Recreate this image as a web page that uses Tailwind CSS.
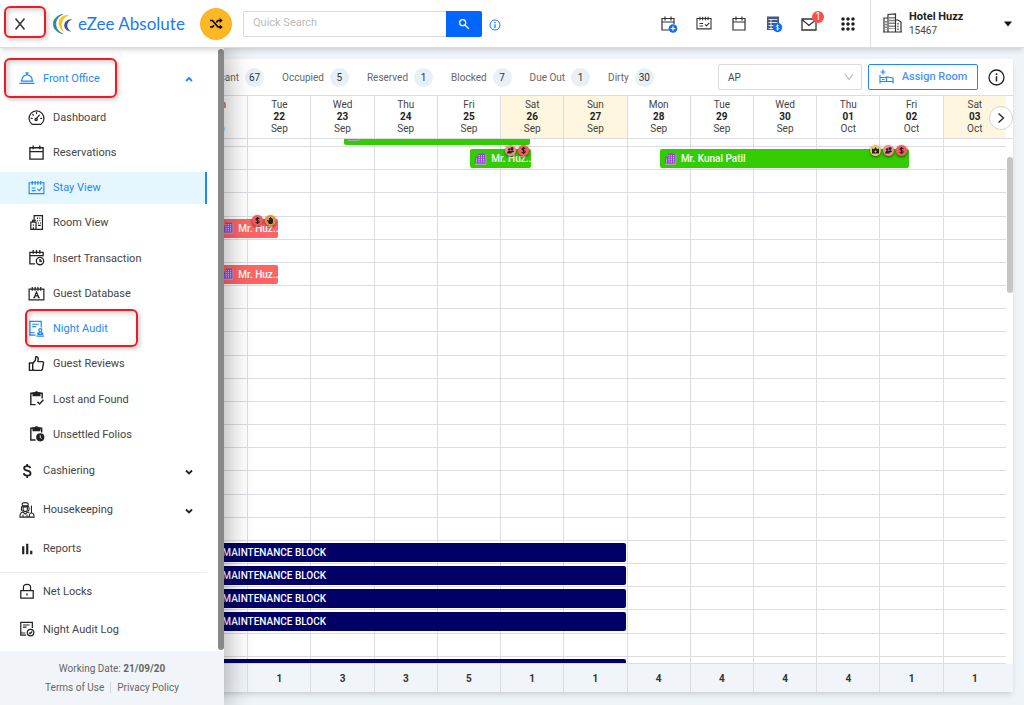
<!DOCTYPE html>
<html lang="en">
<head>
  <meta charset="UTF-8">
  <meta name="viewport" content="width=device-width, initial-scale=1.0">
  <title>eZee Absolute - Stay View</title>
  <script src="https://cdn.jsdelivr.net/npm/@tailwindcss/browser@4"></script>
</head>
<body class="flex h-screen flex-col overflow-hidden bg-[#eff4f8] font-[Roboto,sans-serif] text-[11px] text-[#444]">

  <!-- Icon set -->
  <svg class="hidden">
    <symbol id="i-bell" viewBox="0 0 18 14" fill="none" stroke="currentColor" stroke-width="1.5" stroke-linecap="round">
      <path d="M1 13h16M2.500 10.500h13M3 10a6 6.500 0 0 1 12 0M9 3.500V1.300M7.800 1.300h2.400"/>
    </symbol>
    <symbol id="i-gauge" viewBox="0 0 18 18" fill="none" stroke="currentColor" stroke-width="1.300" stroke-linecap="round">
      <path d="M4.300 16.200a7.900 7.900 0 1 1 9.400 0zM8.300 11l3.700-4.500M3.500 10h1M13.500 10h1M9 3.700v1M5 5.800l.7.700"/>
      <circle cx="8.600" cy="11" r="1.200"/>
    </symbol>
    <symbol id="i-cal" viewBox="0 0 18 18" fill="none" stroke="currentColor" stroke-width="1.400">
      <path d="M2 4h14v12H2zM2 8h14M5.500 1.500v4M12.500 1.500v4"/>
    </symbol>
    <symbol id="i-stay" viewBox="0 0 18 18" fill="none" stroke="currentColor" stroke-width="1.200">
      <path d="M1.200 4h15.600v11.500H1.200zM4.500 2v4M7.500 2v4M10.500 2v4M13.500 2v4M4 9.500h4M4 12.300h4M10 10.500l1.800 1.800 3-3.500"/>
    </symbol>
    <symbol id="i-room" viewBox="0 0 18 18" fill="none" stroke="currentColor" stroke-width="1.300">
      <path d="M6.500 8V1.700h8.800v14.600H3V8.500h5.500v7.800M4.800 8.500V6.800h3.500M5.700 11v1.500M5.700 14v2"/>
      <path d="M9.500 4.500h1M12 4.500h1M9.500 7h1M12 7h1M10.500 9.500h1M12.800 9.500h.8M10.500 12h3" stroke-width="1.400"/>
    </symbol>
    <symbol id="i-calclock" viewBox="0 0 18 18" fill="none" stroke="currentColor" stroke-width="1.400">
      <path d="M7.500 15.800H2V3.500h14V8M2 7h14M5.500 1v4M9 1v4M12.500 1v4"/>
      <circle cx="12.700" cy="12.800" r="3.900"/><path d="M12.700 10.700v2.300h2"/>
    </symbol>
    <symbol id="i-guest" viewBox="0 0 18 18" fill="none" stroke="currentColor" stroke-width="1.300">
      <path d="M1.200 4.300h15.600v11.500H1.200zM4.500 2v4M7.500 2v4M10.500 2v4M13.500 2v4M6.500 13.500L9 7.500l2.500 6M7.500 11.500h3M5.500 13.500h2M10.500 13.500h2"/>
    </symbol>
    <symbol id="i-audit" viewBox="0 0 18 18" fill="none" stroke="currentColor" stroke-width="1.300">
      <path d="M8 16H2V1.500h12V8M4.500 4.500h7M4.500 7h4M2 13.500h5"/>
      <circle cx="13" cy="10.700" r="1.600"/><path d="M12.300 12.200l-.5 1.700h-1.300v1.300h5v-1.300h-1.300l-.5-1.700M9 17h8"/>
    </symbol>
    <symbol id="i-thumb" viewBox="0 0 18 18" fill="none" stroke="currentColor" stroke-width="1.500" stroke-linejoin="round">
      <path d="M1.500 8.500H5v7.800H1.500zM5 9l2.800-3.500.5-3.700c1.800-.3 2.600.8 2.500 2.200L10.500 7H15c1.200 0 1.600.8 1.400 1.800l-1.100 6c-.2.900-.7 1.500-1.700 1.500H7L5 15.500"/>
    </symbol>
    <symbol id="i-clipcheck" viewBox="0 0 18 18" fill="none" stroke="currentColor" stroke-width="1.500">
      <path d="M8 15.500H3V3.500h12V9M10 12.500l2.300 2.300 4-4.500"/><path d="M5.500 5.800V3h2a1.600 1.600 0 0 1 3 0h2v2.800z" fill="currentColor"/>
    </symbol>
    <symbol id="i-clipclock" viewBox="0 0 18 18" fill="none" stroke="currentColor" stroke-width="1.500">
      <path d="M8 15.800H3V3.500h11.500V8"/><path d="M5.500 5.800V3h2a1.600 1.600 0 0 1 3 0h2v2.800z" fill="currentColor"/>
      <circle cx="13" cy="13" r="3.600" fill="currentColor"/><path d="M13 11v2.200l1.300 1" stroke="#fff" stroke-width="1"/>
    </symbol>
    <symbol id="i-dollar" viewBox="0 0 18 18" fill="none" stroke="currentColor" stroke-width="2">
      <path d="M12.700 5.800C12.400 4.300 11 3.600 9.200 3.600 7.200 3.600 5.700 4.500 5.700 6c0 3.500 7.300 1.900 7.300 5.400 0 1.700-1.600 2.700-3.700 2.700-2.300 0-3.700-1-4-2.800M9.200 1v3M9.200 14v3"/>
    </symbol>
    <symbol id="i-maid" viewBox="0 0 18 18" fill="none" stroke="currentColor" stroke-width="1.200">
      <path d="M3.500 2C4 .3 10 .3 10.500 2l-.4 2.200H3.900zM3.900 4.200C2 6 2.600 9.500 3.800 10.500M10.100 4.200C12 6 11.400 9.500 10.200 10.500M4.600 5.500v2.700c0 3.400 4.800 3.400 4.800 0V5.500zM1 16.800c0-3.500 1-5 3.500-5.500L7 13.500l2.500-2.200c1 .2 1.500.5 2 1M.5 17h17M14 4v8M11.500 16.800c0-3 .8-4.500 2.500-4.500s3 1.500 3 4.500M4.500 14v2.500M9 14v2.500"/>
    </symbol>
    <symbol id="i-bars" viewBox="0 0 18 18" fill="currentColor">
      <path d="M3.500 6H6v9H3.500zM8 3h2.500v12H8zM12.500 11H15v4h-2.500z"/>
    </symbol>
    <symbol id="i-lock" viewBox="0 0 18 18" fill="none" stroke="currentColor" stroke-width="1.400">
      <path d="M2 8.500h14V17H2zM5 8.500V4.800C5 .3 13 .3 13 4.800v3.700M9 11.500V14"/>
    </symbol>
    <symbol id="i-log" viewBox="0 0 18 18" fill="none" stroke="currentColor" stroke-width="1.400">
      <path d="M8 16H2V1.500h13V8M4.500 4.500h7.500M4.500 7h4M2 13.500h5"/>
      <circle cx="13" cy="13" r="3.700"/><path d="M11.300 13l1.200 1.300 2.300-2.500"/>
    </symbol>
    <symbol id="i-folio" viewBox="0 0 16 16">
      <path d="M0 15V5h4V1h11v14z" fill="#8b46c4"/>
      <path d="M2 7v7M5.500 2.500V14M8.500 2.500V14M11.500 2.500V14" stroke="#dcc2f2" stroke-width="1.500" stroke-dasharray="1.800 1"/>
      <path d="M14.500 1v14H0" stroke="#d7b8f2" fill="none"/>
    </symbol>
  </svg>

  <header class="relative z-30 flex h-12 shrink-0 items-center border-b border-[#d9dde2] bg-white shadow-md">
    <button class="ml-3 flex size-4 items-center justify-center" aria-label="Close menu">
      <svg class="size-3 text-[#333]" viewBox="0 0 12 12" fill="none" stroke="currentColor" stroke-width="1.500"><path d="M1.500 .5l9 11M10.500 .5l-9 11"/></svg>
    </button>
    <a href="#" class="ml-[25px] flex w-[147px] items-center gap-1 text-[17px] whitespace-nowrap text-[#1b7af5] font-[Lato,sans-serif]">
      <svg class="h-5 w-[21px] shrink-0" viewBox="0 0 21 20">
        <path d="M10 0C-3 3-3 17 10 20 .500 15.500.500 4.500 10 0z" fill="#2b8a9a" stroke="#2b8a9a" stroke-width=".6"/>
        <path d="M17 .800C4 .500 2.500 12 11 18 6.500 11 9 3.500 17 .800z" fill="#fcc419"/>
        <path d="M19.500 5C9 5 8.500 17 18.500 17.500 12.500 14.500 13 7.500 19.500 5z" fill="#3a529f"/>
      </svg>
      eZee Absolute
    </a>
    <button class="flex size-8 shrink-0 items-center justify-center rounded-full bg-[#feb724]" aria-label="Switch">
      <svg class="size-3.5 text-black" viewBox="0 0 14 14" fill="none" stroke="currentColor" stroke-width="1.700"><path d="M1 3.500h2.500l5.500 6.500h3M1 10h2.500L5 8.300M7.300 5.400L9 3.500h3"/><path d="M10.700 1v5l3-2.500zM10.700 7.500v5l3-2.500z" fill="currentColor" stroke="none"/></svg>
    </button>
    <form class="ml-[11px] flex h-[26px] w-[239px]">
      <input type="text" aria-label="Quick Search" placeholder="Quick Search" class="min-w-0 flex-1 rounded-l-xs border border-r-0 border-[#d9d9d9] px-[9px] outline-none placeholder:text-[#bbb]">
      <button type="button" class="flex w-9 items-center justify-center rounded-r-xs bg-[#0066ff] text-white" aria-label="Search">
        <svg class="size-3" viewBox="0 0 12 12" fill="none" stroke="currentColor" stroke-width="1.300"><circle cx="4.700" cy="4.700" r="3"/><path d="M7 7l4 4"/></svg>
      </button>
    </form>
    <button class="ml-[7px] mt-0.5 text-[#1677ff]" aria-label="Search help">
      <svg class="size-3" viewBox="0 0 12 12" fill="none" stroke="currentColor"><circle cx="6" cy="6" r="5"/><path d="M6 5.200v3.800M6 3v1.200" stroke-width="1.300"/></svg>
    </button>

    <nav class="ml-auto flex items-center gap-[17px] pr-[13px] text-[#333]" aria-label="Shortcuts">
      <button aria-label="New booking">
        <svg class="size-[18px]" viewBox="0 0 18 18" fill="none" stroke="currentColor" stroke-width="1.200"><path d="M9 15H2V3.500h12V9M2 7h12M5 1.500v4M11 1.500v4"/><circle cx="13" cy="13.500" r="4.300" fill="#0a6cff" stroke="none"/><path d="M13 11.200v4.600M10.700 13.500h4.600" stroke="#fff"/></svg>
      </button>
      <button aria-label="Stay view"><svg class="-mt-0.5 size-[18px]" viewBox="0 0 20 18"><use href="#i-stay"/></svg></button>
      <button aria-label="Reservations"><svg class="size-[18px]" viewBox="0 0 18 18" fill="none" stroke="currentColor" stroke-width="1.200"><path d="M3 3.500h12v11.500H3zM3 7h12M6 1.500v4M12 1.500v4"/></svg></button>
      <button aria-label="Rates">
        <svg class="size-[18px]" viewBox="0 0 18 18"><path d="M2 1.500h12V15H2z" fill="#44597a"/><path d="M3.500 4.500h9M3.500 7.500h9M3.500 10.500h9M3.500 13.500h5M6 4v10.500" stroke="#fff" stroke-width=".8"/><circle cx="12.500" cy="12.500" r="4.700" fill="#0a6cff"/><path d="M14 11c-.5-.8-2.800-.8-2.800.3 0 1.300 2.800.9 2.800 2.200 0 1.200-2.500 1.200-3 .2M12.500 9.500v6" fill="none" stroke="#fff" stroke-width=".8"/></svg>
      </button>
      <button class="relative" aria-label="Messages">
        <svg class="size-[18px]" viewBox="0 0 18 18" fill="none" stroke="currentColor" stroke-width="1.300"><path d="M2 4h14v11H2zM2 4.500l7 6 7-6"/></svg>
        <span class="absolute -top-1 left-3 flex size-3 items-center justify-center rounded-full bg-[#ff4d4f] text-[10px] leading-none text-white">1</span>
      </button>
      <button class="ml-1" aria-label="Apps">
        <svg class="size-[18px]" viewBox="0 0 18 18" fill="none" stroke="#222" stroke-width="3.600" stroke-linecap="round"><path d="M4 4h.01M9 4h.01M14 4h.01M4 9h.01M9 9h.01M14 9h.01M4 14h.01M9 14h.01M14 14h.01"/></svg>
      </button>
    </nav>
    <button class="flex h-full w-[154px] items-center border-l border-[#dcdfe4] px-3 text-left">
      <svg class="-mt-0.5 h-5 w-[19px]" viewBox="0 0 19 20" fill="none" stroke="#333" stroke-width="1.200"><path d="M5 19V1.500L12.500 1v18M5 5H1v14h17V9l-3-2h-2.500M0 19h19"/><path d="M7 4v12M9 4v12M11 4v12M3 8v9M15 10v7" stroke-dasharray="1.500 1.300"/></svg>
      <span class="ml-[7px] flex-1 leading-[14px]"><b class="block text-[#222]">Hotel Huzz</b><span class="block text-[10px]">15467</span></span>
      <svg class="h-1.5 w-2" viewBox="0 0 8 6"><path d="M0 .5h8L4 5.500z" fill="#111"/></svg>
    </button>
    <span class="pointer-events-none absolute top-1.5 left-1 h-8 w-[42px] rounded-md border-2 border-[#ed1c24] shadow-[2px_2px_4px_#0003,inset_2px_2px_5px_#0003]"></span>
  </header>

  <div class="flex min-h-0 flex-1">
    <aside class="relative z-20 flex w-56 shrink-0 flex-col bg-white shadow-[4px_0_24px_#0000004d]">
      <nav class="flex-1 pt-3 pr-[17px] [&_a>svg:first-child]:-mt-0.5" aria-label="Main menu">
        <a href="#" class="relative flex h-[38px] items-center gap-2 pl-[19px] text-[#1e88ff]">
          <svg class="size-4"><use href="#i-bell"/></svg>
          <span class="flex-1">Front Office</span>
          <svg class="mr-3.5 h-2 w-2" viewBox="0 0 8 8" fill="none" stroke="currentColor" stroke-width="1.800"><path d="M1 6l3-3 3 3"/></svg>
          <span class="pointer-events-none absolute -top-0.5 left-1 h-10 w-[113px] rounded-md border-2 border-[#ed1c24] shadow-[2px_2px_4px_#0003,inset_2px_2px_5px_#0003]"></span>
        </a>
        <ul class="mt-1 mb-px flex h-[349px] flex-col justify-between">
          <li><a href="#" class="flex h-8 items-center gap-2 pl-7"><svg class="size-[17px] text-[#222]"><use href="#i-gauge"/></svg>Dashboard</a></li>
          <li><a href="#" class="flex h-8 items-center gap-2 pl-7"><svg class="size-[17px] text-[#222]"><use href="#i-cal"/></svg>Reservations</a></li>
          <li><a href="#" class="flex h-8 items-center gap-2 border-r-2 border-[#1e88ff] bg-[#e5f6ff] pl-7 text-[#1e88ff]"><svg class="size-[17px]"><use href="#i-stay"/></svg>Stay View</a></li>
          <li><a href="#" class="flex h-8 items-center gap-2 pl-7"><svg class="size-[17px] text-[#222]"><use href="#i-room"/></svg>Room View</a></li>
          <li><a href="#" class="flex h-8 items-center gap-2 pl-7"><svg class="size-[17px] text-[#222]"><use href="#i-calclock"/></svg>Insert Transaction</a></li>
          <li><a href="#" class="flex h-8 items-center gap-2 pl-7"><svg class="size-[17px] text-[#222]"><use href="#i-guest"/></svg>Guest Database</a></li>
          <li><a href="#" class="relative flex h-8 items-center gap-2 pl-7 text-[#1e88ff]"><svg class="size-[17px]"><use href="#i-audit"/></svg>Night Audit<span class="pointer-events-none absolute -top-1 left-[25px] h-[38px] w-[113px] rounded-md border-2 border-[#ed1c24] shadow-[2px_2px_4px_#0003,inset_2px_2px_5px_#0003]"></span></a></li>
          <li><a href="#" class="flex h-8 items-center gap-2 pl-7"><svg class="size-[17px] text-[#222]"><use href="#i-thumb"/></svg>Guest Reviews</a></li>
          <li><a href="#" class="flex h-8 items-center gap-2 pl-7"><svg class="size-[17px] text-[#222]"><use href="#i-clipcheck"/></svg>Lost and Found</a></li>
          <li><a href="#" class="flex h-8 items-center gap-2 pl-7"><svg class="size-[17px] text-[#222]"><use href="#i-clipclock"/></svg>Unsettled Folios</a></li>
        </ul>
        <a href="#" class="flex h-[39px] items-center gap-2 pl-[19px]">
          <svg class="size-4 text-[#222]"><use href="#i-dollar"/></svg>
          <span class="flex-1">Cashiering</span>
          <svg class="mr-3.5 h-2 w-2 text-[#222]" viewBox="0 0 8 8" fill="none" stroke="currentColor" stroke-width="1.800"><path d="M1 2.500l3 3 3-3"/></svg>
        </a>
        <a href="#" class="flex h-[39px] items-center gap-2 pl-[19px]">
          <svg class="size-4 text-[#222]"><use href="#i-maid"/></svg>
          <span class="flex-1">Housekeeping</span>
          <svg class="mr-3.5 h-2 w-2 text-[#222]" viewBox="0 0 8 8" fill="none" stroke="currentColor" stroke-width="1.800"><path d="M1 2.500l3 3 3-3"/></svg>
        </a>
        <a href="#" class="flex h-[39px] items-center gap-2 pl-[19px]"><svg class="size-4 text-[#222]"><use href="#i-bars"/></svg>Reports</a>
        <hr class="mt-[3px] border-[#e8eaed]">
        <a href="#" class="flex h-[38px] items-center gap-2 pl-[19px]"><svg class="size-4 text-[#222]"><use href="#i-lock"/></svg>Net Locks</a>
        <a href="#" class="flex h-[38px] items-center gap-2 pl-[19px]"><svg class="size-4 text-[#222]"><use href="#i-log"/></svg>Night Audit Log</a>
      </nav>
      <div class="absolute top-px right-0 bottom-[55px] w-1.5 rounded-full bg-[#868889]"></div>
      <footer class="flex h-[54px] flex-col items-center justify-center gap-1 bg-[#f1f5f9] text-[10px] leading-[15px] text-[#666]">
        <p>Working Date: <b>21/09/20</b></p>
        <p><a href="#" class="border-r border-[#d5d9de] pr-1.5">Terms of Use</a><a href="#" class="pl-1.5">Privacy Policy</a></p>
      </footer>
    </aside>

    <main class="min-w-0 flex-1 overflow-hidden pt-[11px] pr-[11px] pb-[13px]">
      <!-- The board runs on under the open menu -->
      <section class="relative -ml-10 flex h-full flex-col bg-white shadow-md">
        <div class="flex h-9 shrink-0 items-center text-[10px]">
          <ul id="stats" class="ml-6 flex gap-[18px]"></ul>
          <select aria-label="Meal plan" class="mr-[7px] ml-auto h-[26px] w-36 appearance-none rounded-xs border border-[#d9d9d9] bg-white pl-[9px]"><option>AP</option></select>
          <svg class="pointer-events-none -ml-[25px] h-2 w-2.5" viewBox="0 0 10 8" fill="none" stroke="#bbb" stroke-width="1.200"><path d="M1 1l4 5.500L9 1"/></svg>
          <button class="ml-3.5 flex h-[26px] w-[110px] items-center justify-center gap-2 rounded-xs border border-[#1e88ff] text-[11px] font-medium text-[#4a94fb]">
            <svg class="-mt-0.5 size-[15px] text-[#1e88ff]" viewBox="0 0 15 15" fill="none" stroke="currentColor" stroke-width="1.200"><path d="M1 6v8.500M1 12.500h13M14 14.500V9L7.500 8v4.500M1 8.500h6.500M4 .5v5M1.500 3h5M3 10.500h2.500"/></svg>
            Assign Room
          </button>
          <button class="mr-2 ml-2.5 text-[#222]" aria-label="Legend">
            <svg class="size-[17px]" viewBox="0 0 17 17" fill="none" stroke="currentColor" stroke-width="1.300"><circle cx="8.500" cy="8.500" r="7.500"/><path d="M8.500 7.300v5.200M8.500 4.300v1.600" stroke-width="1.500"/></svg>
          </button>
        </div>
        <div class="relative min-h-0 flex-1">
          <table class="h-full w-full table-fixed border-separate border-spacing-0 text-center text-[10px]">
            <thead><tr id="days" class="h-11"></tr></thead>
            <tbody id="board"></tbody>
            <tfoot><tr id="totals" class="h-7 bg-[#f1f5f9]"></tr></tfoot>
          </table>
          <div class="absolute top-[62px] right-0 h-[136px] w-1.5 rounded-full bg-[#c6c6c6]"></div>
          <button class="absolute top-[11px] right-0 flex size-6 items-center justify-center rounded-full border border-[#d5d5d5] bg-white text-[#222]" aria-label="Next days">
            <svg class="size-2.5" viewBox="0 0 10 10" fill="none" stroke="currentColor" stroke-width="1.300"><path d="M2.500 .5L7.500 5l-5 4.500"/></svg>
          </button>
        </div>
      </section>
    </main>
  </div>

  <script>
    const stats = [['Vacant', 67], ['Occupied', 5], ['Reserved', 1], ['Blocked', 7], ['Due Out', 1], ['Dirty', 30]];

    const days = [
      ['Mon', '21', 'Sep', ''], ['Tue', '22', 'Sep', 1], ['Wed', '23', 'Sep', 3], ['Thu', '24', 'Sep', 3],
      ['Fri', '25', 'Sep', 5], ['Sat', '26', 'Sep', 1], ['Sun', '27', 'Sep', 1], ['Mon', '28', 'Sep', 4],
      ['Tue', '29', 'Sep', 4], ['Wed', '30', 'Sep', 4], ['Thu', '01', 'Oct', 4], ['Fri', '02', 'Oct', 1], ['Sat', '03', 'Oct', 1]
    ];

    const colors = { stay: 'bg-[#33cc00]', due: 'bg-[#ff6464]', block: 'bg-[#000066]' };

    // row, first day, length in days
    const bookings = [
      { row: 0, day: 2, len: 3, type: 'stay', name: '', marks: [] },
      { row: 1, day: 4, len: 0.98, type: 'stay', name: 'Mr. Huz...', marks: ['group', 'money'] },
      { row: 1, day: 7, len: 4.01, type: 'stay', name: 'Mr. Kunal Patil', marks: ['vip', 'group', 'money'] },
      { row: 4, day: 0, len: 0.98, type: 'due', name: 'Mr. Huz...', marks: ['money', 'hold'] },
      { row: 6, day: 0, len: 0.98, type: 'due', name: 'Mr. Huz...', marks: [] },
      { row: 18, day: 0, len: 6.57, type: 'block', name: 'MAINTENANCE BLOCK', marks: [] },
      { row: 19, day: 0, len: 6.57, type: 'block', name: 'MAINTENANCE BLOCK', marks: [] },
      { row: 20, day: 0, len: 6.57, type: 'block', name: 'MAINTENANCE BLOCK', marks: [] },
      { row: 21, day: 0, len: 6.57, type: 'block', name: 'MAINTENANCE BLOCK', marks: [] },
      { row: 23, day: 0, len: 6.57, type: 'block', name: '', marks: [] }
    ];

    const marks = {
      money: '<svg class="size-[11px] rounded-full bg-[#f9595c] shadow-sm shadow-black/50" viewBox="0 0 11 11" fill="none" stroke="#222" stroke-width="1.1"><path d="M7.200 4C6.800 2.700 4 2.800 4 4.200c0 1.500 3.200 1 3.200 2.500 0 1.500-3 1.600-3.500.2M5.500 2v7"/></svg>',
      group: '<svg class="size-[11px] rounded-full bg-[#f58a90] shadow-sm shadow-black/50" viewBox="0 0 11 11" fill="#222"><circle cx="4.200" cy="4.500" r="1.300"/><circle cx="7" cy="3.500" r="1.500"/><path d="M2 8.500c0-3 3-3 3.500-2.500C6.500 4.500 9 5 9 7L6.500 7.500v1z"/></svg>',
      vip: '<svg class="size-[11px] rounded-full bg-[#e9c75c] shadow-sm shadow-black/50" viewBox="0 0 11 11" fill="#222"><path d="M2 3.500l2 .8L5.500 2 7 4.300l2-.8v5H2z"/><circle cx="5.500" cy="6.500" r="1" fill="#e9c75c"/></svg>',
      hold: '<svg class="size-[11px] rounded-full bg-[#e8913a] shadow-sm shadow-black/50" viewBox="0 0 11 11" fill="#222"><path d="M2 5h1.500l.5 1V3h1V2h1v1h1v1h1v3.500L7 9H4z"/></svg>'
    };

    function bookingHtml(b) {
      const place = `left:52%;width:${b.len * 100}%`;
      if (b.row === 0) {
        return `<div class="absolute top-0 h-1.5 overflow-hidden rounded-b-xs bg-[#33cc00]" style="${place}"><svg class="-mt-2.5 ml-1 size-3"><use href="#i-folio"/></svg></div>`;
      }
      if (b.row === 23) {
        return `<div class="absolute top-0.5 h-1 rounded-t-xs bg-[#000066]" style="${place}"></div>`;
      }
      const icon = b.type === 'block' ? '' : '<svg class="mr-1 size-3 shrink-0"><use href="#i-folio"/></svg>';
      const badges = b.marks.length ? `<span class="absolute -top-1 right-0.5 flex gap-0.5">${b.marks.map(m => marks[m]).join('')}</span>` : '';
      return `<div class="absolute top-0.5 flex h-[19px] items-center rounded-xs pl-[5px] text-left font-medium whitespace-nowrap text-white ${colors[b.type]}" style="${place}">${icon}${b.name}${badges}</div>`;
    }

    document.getElementById('stats').innerHTML = stats.map(([label, n]) =>
      `<li class="flex items-center gap-1.5 whitespace-nowrap text-[#666]">${label}<span class="flex size-[19px] items-center justify-center rounded-full bg-[#e8f0f7] text-[#333]">${n}</span></li>`).join('');

    document.getElementById('days').innerHTML = days.map(([day, date, month]) =>
      `<th class="border-y border-l border-[#dcdde2] p-0 leading-3 font-normal ${day === 'Sat' || day === 'Sun' ? 'bg-[#fef6de]' : ''}">${day}<b class="block text-[#222]">${date}</b>${month}</th>`).join('')
      + '<th class="w-[7px] border-y border-[#dcdde2] p-0"></th>';

    let rows = '';
    for (let r = 0; r < 24; r++) {
      const height = r === 0 ? 'h-2' : r === 23 ? 'h-[7px]' : '';
      rows += `<tr class="${height}">`;
      for (let d = 0; d < days.length; d++) {
        const b = bookings.find(x => x.row === r && x.day === d);
        rows += `<td class="border-b border-l border-[#dcdde2] p-0 ${b ? 'relative' : ''}">${b ? bookingHtml(b) : ''}</td>`;
      }
      rows += '<td class="p-0"></td></tr>';
    }
    document.getElementById('board').innerHTML = rows;

    document.getElementById('totals').innerHTML = days.map(d =>
      `<td class="border-l border-[#dcdde2] p-0 font-bold text-[#333]">${d[3]}</td>`).join('') + '<td class="p-0"></td>';
  </script>
</body>
</html>
